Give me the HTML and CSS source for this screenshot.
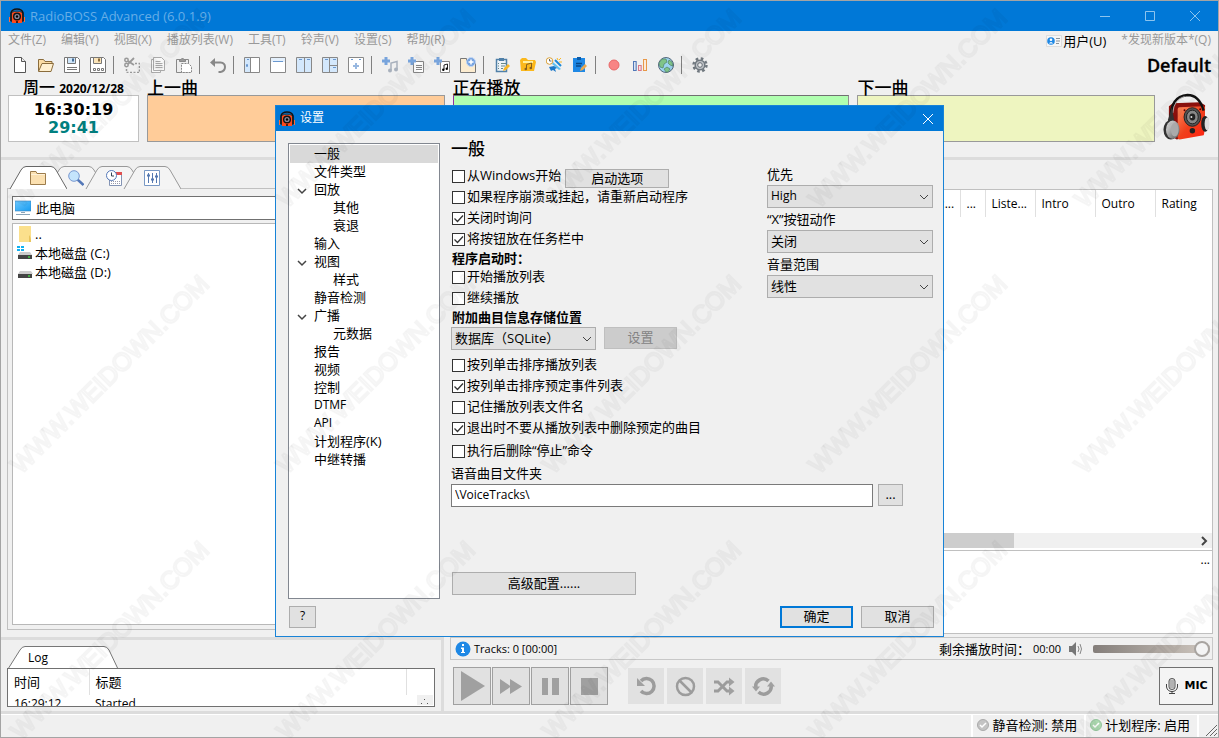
FILE: index.html
```html
<!DOCTYPE html>
<html lang="zh-CN">
<head>
<meta charset="utf-8">
<title>RadioBOSS Advanced (6.0.1.9)</title>
<link rel="stylesheet" href="styles.css">
</head>
<body>
<svg class="defs" aria-hidden="true">
  <defs>
    <linearGradient id="red" x1="0" y1="0" x2="1" y2="1"><stop offset="0" stop-color="#ff8a5c"/><stop offset="0.5" stop-color="#f0401c"/><stop offset="1" stop-color="#ff2010"/></linearGradient>
    <linearGradient id="cup" x1="0" y1="0" x2="1" y2="1"><stop offset="0" stop-color="#e8e8e8"/><stop offset="1" stop-color="#555"/></linearGradient>
    <linearGradient id="screen" x1="0" y1="0" x2="1" y2="1"><stop offset="0" stop-color="#6cc8ff"/><stop offset="1" stop-color="#189cf0"/></linearGradient>
    <symbol id="app" viewBox="0 0 16 16"><path d="M2 8V5q1-4 6-4t6 4v3" fill="none" stroke="#111" stroke-width="1.600"/><path d="M3 4h10v11H3z" fill="#ff4a1c"/><path d="M3 4.500Q5 3 8 3t5 1.500" stroke="#333" fill="none"/><path d="M1 7l2-1v8l-2-1zM15 7l-2-1v8l2-1z" fill="#222"/><path d="M.5 9v5M15.500 9v5" stroke="#ff6a3a"/><circle cx="8" cy="8.500" r="4" fill="#111"/><circle cx="8" cy="8.500" r="2.600" fill="#889"/><circle cx="8" cy="8.500" r="1.200" fill="#000"/><circle cx="8" cy="14" r="1" fill="#111"/></symbol>
    <symbol id="plus" viewBox="0 0 16 16"><path d="M2.500 0h3v2.500H8v3H5.500V8h-3V5.500H0v-3h2.500z" fill="#78a4dc"/></symbol>
    <symbol id="tab" viewBox="0 0 58 23"><path d="M1 23L12 4q2-3.500 5-3.500h25q3 0 5 3.500l11 19"/></symbol>
  </defs>
</svg>
<div class="window">
  <header class="titlebar">
    <svg class="icon"><use href="#app"/></svg>
    <h1>RadioBOSS Advanced (6.0.1.9)</h1>
    <div class="caption">
      <button aria-label="最小化"><svg viewBox="0 0 10 10"><path d="M0 5.500h10"/></svg></button>
      <button aria-label="最大化"><svg viewBox="0 0 10 10"><path d="M.5.5h9v9h-9z"/></svg></button>
      <button aria-label="关闭窗口"><svg viewBox="0 0 10 10"><path d="M0 0l10 10M10 0L0 10"/></svg></button>
    </div>
  </header>
  <nav class="menubar">
    <button>文件(Z)</button><button>编辑(Y)</button><button>视图(X)</button><button>播放列表(W)</button><button>工具(T)</button><button>铃声(V)</button><button>设置(S)</button><button>帮助(R)</button>
    <button class="user"><svg class="icon" viewBox="0 0 16 16"><path d="M.5 2.500h15v11H.5z" fill="#f6f6f6" stroke="#ddd"/><circle cx="5" cy="8" r="3.800" fill="#1e88e5"/><circle cx="5" cy="6.800" r="1.300" fill="#fff"/><path d="M2.800 10.500q2.200-3 4.400 0z" fill="#fff"/><path d="M10 5.500h4M10 8h4M10 10.500h3" stroke="#8a9299"/></svg>用户(U)</button>
    <button>*发现新版本*(Q)</button>
  </nav>
  <div class="toolbar" role="toolbar">
    <button aria-label="新建"><svg viewBox="0 0 16 16"><path d="M2.500.5h7l4 4v11h-11z" fill="#fff" stroke="#555"/><path d="M9.500.5v4h4" fill="#eee" stroke="#555"/></svg></button>
    <button aria-label="打开"><svg viewBox="0 0 16 16"><path d="M.5 14V2.500h5l1.500 2h7V7" fill="#fbdca4" stroke="#8a6c3c"/><path d="M.5 14.500L4 6.500h11.500L13 14.500z" fill="#fff0d0" stroke="#8a6c3c"/></svg></button>
    <button aria-label="保存"><svg viewBox="0 0 16 16"><path d="M.5.5h13l2 2v13H.5z" fill="#fff" stroke="#777"/><path d="M3.500.5h8v6h-8z" fill="#cfe6fa" stroke="#777"/><path d="M9 1.500v3" stroke="#446c96" stroke-width="2"/><path d="M3 10.500h10M3 12.500h10" stroke="#777"/></svg></button>
    <button aria-label="另存为"><svg viewBox="0 0 16 16"><path d="M.5.5h13l2 2v13H.5z" fill="#fff" stroke="#777"/><path d="M3.500.5h8v6h-8z" fill="#fbe4b8" stroke="#777"/><path d="M9 1.500v3" stroke="#8c6c3c" stroke-width="2"/><path d="M3.500 11.500h2v2h-2zM7.500 11.500h2v2h-2zM11.500 11.500h2v2h-2z" fill="none" stroke="#777"/></svg></button>
    <i class="sep"></i>
    <button aria-label="剪切"><svg viewBox="0 0 16 16" fill="none" stroke="#999"><circle cx="2.500" cy="3" r="1.700" stroke-width="1.500"/><circle cx="2.500" cy="8" r="1.700" stroke-width="1.500"/><path d="M4 4l6 4M4 7l6-6" stroke-width="1.800"/><path d="M11 6.500h4.500v9h-13V11" stroke-width="1.500" stroke-dasharray="2 1.500"/></svg></button>
    <button aria-label="复制"><svg viewBox="0 0 16 16" fill="#f8f8f8" stroke="#aaa"><path d="M1.500 2.500h9v13h-9z"/><path d="M3.500.5h8l3 3v10h-11z"/><path d="M5.500 4.500h5M5.500 6.500h7M5.500 8.500h7M5.500 10.500h7"/></svg></button>
    <button aria-label="粘贴"><svg viewBox="0 0 16 16" fill="#eee" stroke="#888"><path d="M.5 2.500h12v13H.5z"/><path d="M3.500 4.500v-2h1.500q1.500-3 3 0h1.500v2z" fill="#999"/><path d="M5.500 6.500h7l3 3v6h-10z" fill="#fff" stroke-dasharray="2 1"/></svg></button>
    <i class="sep"></i>
    <button aria-label="撤销"><svg viewBox="0 0 16 16"><path d="M5 1L0 5.500 5 10z" fill="#888"/><path d="M3 5.500h7.500q4.500.5 4.500 4.500t-4.500 5H8.500" fill="none" stroke="#888" stroke-width="2"/></svg></button>
    <i class="sep"></i>
    <button aria-label="布局一"><svg viewBox="0 0 16 16" fill="#fff" stroke="#888"><path d="M.5.5h15v15H.5z"/><path d="M1 1h5v14H1z" fill="#d4e8fc" stroke="none"/><path d="M6.500 1v14"/><path d="M3 2.500h2M2.500 7.500h1v2h-1z" stroke="#6a98d0"/></svg></button>
    <button aria-label="布局二"><svg viewBox="0 0 16 16" fill="#fff" stroke="#888"><path d="M.5.5h15v15H.5z"/><path d="M1 1h14v4H1z" fill="#e4f0fc" stroke="none"/><path d="M3 4.500h10" stroke="#6a98d0"/></svg></button>
    <button aria-label="布局三"><svg viewBox="0 0 16 16" fill="#d4e8fc" stroke="#888"><path d="M.5.5h15v15H.5z"/><path d="M8.500 1v14"/><path d="M3 2.500h3M11 2.500h3" stroke="#6a98d0"/></svg></button>
    <button aria-label="布局四"><svg viewBox="0 0 16 16" fill="#d4e8fc" stroke="#888"><path d="M.5.5h15v15H.5z"/><path d="M7.500 1v14M8 8.500h7"/><path d="M3 2.500h3M11 2.500h3M11 10.500h3" stroke="#6a98d0"/></svg></button>
    <button aria-label="布局五"><svg viewBox="0 0 16 16" fill="#fff" stroke="#888"><path d="M.5.5h15v15H.5z"/><path d="M3 2.500h2M11 2.500h2" stroke="#6a98d0"/><path d="M8 6v6M5 9h6" stroke="#98b8e0" stroke-width="2"/></svg></button>
    <i class="sep"></i>
    <button aria-label="添加音轨"><svg viewBox="0 0 16 16"><use href="#plus" width="16" height="16"/><path d="M9 13V6l6-1.500V12" fill="none" stroke="#a8b0bc" stroke-width="1.500"/><circle cx="8" cy="13.500" r="2" fill="#a8b0bc"/><circle cx="14" cy="12.500" r="2" fill="#a8b0bc"/></svg></button>
    <button aria-label="添加列表"><svg viewBox="0 0 16 16"><path d="M5.500 4.500h10v11h-10z" fill="#fff" stroke="#888"/><path d="M8 8.500h6M8 10.500h6M8 12.500h6" stroke="#888"/><use href="#plus" width="16" height="16"/></svg></button>
    <button aria-label="添加曲目"><svg viewBox="0 0 16 16"><path d="M6.500 4.500h9v11h-9z" fill="#fff" stroke="#888"/><path d="M10 12.500V8l3.500-1v4.500" fill="none" stroke="#222"/><circle cx="9.300" cy="12.800" r="1.200"/><circle cx="12.800" cy="11.800" r="1.200"/><use href="#plus" width="16" height="16"/></svg></button>
    <button aria-label="添加文件夹"><svg viewBox="0 0 16 16"><path d="M.5 15V1.500h6v3h9v11H.5z" fill="#fcecd0" stroke="#777"/><circle cx="11" cy="5" r="4.500" fill="#78a4e0" stroke="#c4d8f4"/><path d="M11 2.500v5M8.500 5h5" stroke="#fff" stroke-width="1.500"/></svg></button>
    <i class="sep"></i>
    <button aria-label="任务列表"><svg viewBox="0 0 16 16"><path d="M2.500 2.500h10v12h-10z" fill="#eef4fa" stroke="#5080a8" stroke-width="1.500"/><path d="M5 1h5v3H5z" fill="#5080a8"/><path d="M4 6.500h1M7 6.500h5M4 9h1M7 9h4M4 11.500h1M7 11.500h2" stroke="#688"/><path d="M9 14l1-3 4-4 2 2-4 4z" fill="#f8b828"/></svg></button>
    <button aria-label="音乐文件夹"><svg viewBox="0 0 16 16"><path d="M1 14L0 3l2-2h4l2 2h7l1 2-2 9z" fill="#fbb81c"/><path d="M3 4h10v2H3z" fill="#fff0a0"/><path d="M6.500 12V7.500l5-1.500v5" fill="none" stroke="#876020"/><circle cx="5.800" cy="12" r="1.300" fill="#876020"/><circle cx="10.800" cy="11" r="1.300" fill="#876020"/></svg></button>
    <button aria-label="广告计划"><svg viewBox="0 0 16 16"><path d="M7 5l8 7-2 1-7-6z" fill="#60c0f0"/><path d="M9 3l6 6" stroke="#1c88d8" stroke-width="2"/><path d="M3 10l5-1 3 2-2 1 1 3-3-2-2 1z" fill="#1c78c8"/><path d="M11 1l1 2M15 1l-2 2M13 5l3 0" stroke="#f8b828"/><circle cx="3.500" cy="4" r="3.300" fill="#fff" stroke="#d8a038"/><path d="M3.500 2v2h2" stroke="#666" fill="none"/></svg></button>
    <button aria-label="编辑计划"><svg viewBox="0 0 16 16"><path d="M1 1h12v14H1z" fill="#1e88e5"/><path d="M5 0h4v3H5z" fill="#0c5ca8"/><path d="M4 6.500h6M4 9h5" stroke="#0a4888" stroke-width="1.500"/><path d="M8 14l1-3 4-4 2 2-4 4z" fill="#e8a850"/></svg></button>
    <i class="sep"></i>
    <button aria-label="录音"><svg viewBox="0 0 16 16"><circle cx="8" cy="8" r="5" fill="#f88484" stroke="#e86868"/></svg></button>
    <button aria-label="统计"><svg viewBox="0 0 16 16" fill="#fff" stroke-width="1.200"><path d="M1.600 4.500h2.500v9H1.600z" stroke="#5078b8"/><path d="M6.600 8.500h2.500v5H6.600z" stroke="#d87888"/><path d="M11.600 2.500h2.800v11h-2.800z" stroke="#e89848"/></svg></button>
    <button aria-label="网络"><svg viewBox="0 0 16 16"><circle cx="8" cy="8" r="7.500" fill="#9cd4f0" stroke="#56687c"/><path d="M1 6l3-4 4 0 1 3-3 2-1 4-3-1zM8 15l-2-3 3-2 3 2-2 3zM11 3l3 2 1 4-3-1-2-2z" fill="#80c488" stroke="#508468" stroke-width=".7"/></svg></button>
    <i class="sep"></i>
    <button aria-label="选项"><svg viewBox="0 0 16 16"><circle cx="8" cy="8" r="6.500" fill="none" stroke="#70787f" stroke-width="2.400" stroke-dasharray="2.600 2.500"/><circle cx="8" cy="8" r="4.800" fill="#c0c4c8" stroke="#70787f" stroke-width="1.500"/><circle cx="8" cy="8" r="2.300" fill="#eee" stroke="#687078"/></svg></button>
    <strong>Default</strong>
  </div>
  <section class="decks">
    <div class="deck clock"><h2>周一 <b>2020/12/28</b></h2><div><time>16:30:19</time><time class="left-time">29:41</time></div></div>
    <div class="deck prev"><h2>上一曲</h2><div></div></div>
    <div class="deck now"><h2>正在播放</h2><div></div></div>
    <div class="deck next"><h2>下一曲</h2><div></div></div>
    <svg class="logo" viewBox="0 0 48 48"><path d="M6 13l4-3 28-1 5 3-1 28-28 7-8-5z" fill="#8c100c"/><path d="M17 14l24-1q2 0 2 2l-1 26q0 2-2 2l-23 4q-2 0-2-2V16q0-2 2-2z" fill="url(#red)"/><path d="M8 27Q7 3 25 1.500q12 0 16.500 16" fill="none" stroke="#111" stroke-width="2.500"/><path d="M10 20Q11 6 22 3" fill="none" stroke="#aaa"/><ellipse cx="30" cy="24" rx="8.500" ry="9.500" fill="#555" stroke="#222"/><ellipse cx="30" cy="24" rx="6" ry="7" fill="#888" stroke="#222"/><ellipse cx="30" cy="24" rx="3" ry="3.500" fill="#222"/><circle cx="29" cy="24" r="1" fill="#ddd"/><circle cx="30" cy="38" r="2.800" fill="#222"/><circle cx="22" cy="17" r="1" fill="#500"/><circle cx="38" cy="16" r="1" fill="#500"/><ellipse cx="43" cy="31" rx="4" ry="8" fill="#222"/><ellipse cx="45" cy="31" rx="2.500" ry="6.500" fill="#ddd"/><path d="M9 14l3 16-5 4-2-7z" fill="#333"/><ellipse cx="8" cy="37" rx="7.500" ry="10" fill="#333"/><ellipse cx="10" cy="37" rx="7" ry="9.500" fill="url(#cup)"/><ellipse cx="12" cy="37" rx="4" ry="7" fill="#aaa"/></svg>
  </section>
  <main class="workspace">
    <section class="left">
      <div class="browser">
        <div class="tabs" role="tablist">
          <button class="tab active" role="tab" aria-label="文件"><svg class="shape"><use href="#tab"/></svg><svg class="icon" viewBox="0 0 16 16"><path d="M.5 14.500v-13H6l1 2h8.500v11z" fill="#fbe0b0" stroke="#9c7c4c"/><path d="M1 4.500h14" stroke="#fff2d8"/></svg></button>
          <button class="tab" role="tab" aria-label="搜索"><svg class="shape"><use href="#tab"/></svg><svg class="icon" viewBox="0 0 16 16"><path d="M9.500 9.500l6 5.500" stroke="#5478b8" stroke-width="2.500"/><circle cx="6" cy="6" r="5.300" fill="#c4e4fc" stroke="#7898d0"/></svg></button>
          <button class="tab" role="tab" aria-label="计划"><svg class="shape"><use href="#tab"/></svg><svg class="icon" viewBox="0 0 16 16"><path d="M3.500 2.500h12v13h-12z" fill="#fff" stroke="#8494b4"/><path d="M10 2h6v3h-6z" fill="#e05050"/><path d="M5 11.500h9M5 13.500h9" stroke="#99a" stroke-dasharray="1 1"/><circle cx="5.500" cy="5.500" r="5" fill="#fff" stroke="#5478b8"/><path d="M5.500 2.500V6h2.500" stroke="#345" fill="none"/></svg></button>
          <button class="tab" role="tab" aria-label="均衡器"><svg class="shape"><use href="#tab"/></svg><svg class="icon" viewBox="0 0 16 16"><path d="M.5.5h15v15H.5z" fill="#fff" stroke="#7898c4"/><path d="M4.500 3v10M8.500 3v10M12.500 3v10" stroke="#5478b0"/><path d="M3 5.500h3M7 9.500h3M11 6.500h3" stroke="#5478b0" stroke-width="2"/></svg></button>
        </div>
        <div class="files">
          <button class="path"><svg class="icon" viewBox="0 0 16 16"><path d="M0 1h16v10H0z" fill="url(#screen)"/><path d="M0 1h16v10H0z" fill="none" stroke="#3c84bc" stroke-width=".6"/><path d="M1 14.500h14M6 12.500h4" stroke="#8aa4b8"/></svg>此电脑</button>
          <ul class="drives">
            <li><svg class="icon" viewBox="0 0 16 16"><path d="M2 0h12v16H2z" fill="#fbe08c"/><path d="M12 9q2 2 2 7h-2z" fill="#e8c45c"/></svg>..</li>
            <li><svg class="icon" viewBox="0 0 16 16"><path d="M0 1h3v2H0zM4 1h3v2H4zM0 4h3v2H0zM4 4h3v2H4z" fill="#10b0f0"/><path d="M3 7h10l2 3H1z" fill="#ccc"/><path d="M1 10h14v4H1z" fill="#444"/><path d="M11 12h2" stroke="#4c4" stroke-width="1.500"/></svg>本地磁盘 (C:)</li>
            <li><svg class="icon" viewBox="0 0 16 16"><path d="M3 7h11l2 3H1z" fill="#ccc"/><path d="M1 10h14v4H1z" fill="#444"/><path d="M11 12h2" stroke="#4c4" stroke-width="1.500"/></svg>本地磁盘 (D:)</li>
          </ul>
        </div>
      </div>
      <div class="log">
        <button class="logtab"><svg viewBox="0 0 112 23"><path d="M1 23L13 4q2-3.500 5-3.500h79q3 0 5 3.500l9 19"/></svg><span>Log</span></button>
        <div class="logbox">
          <table><thead><tr><th>时间</th><th>标题</th><th></th></tr></thead><tbody><tr><td>16:29:12</td><td>Started</td><td></td></tr></tbody></table>
          <svg class="corner" viewBox="0 0 16 10"><path d="M4 8.500h1M7 4.500h1M10 8.500h1" stroke="#555"/></svg>
        </div>
      </div>
    </section>
    <section class="right">
      <div class="playlist">
        <table><thead><tr><th></th><th>:...</th><th>...</th><th>Liste...</th><th>Intro</th><th>Outro</th><th>Rating</th></tr></thead></table>
        <div class="hscroll"><span></span><svg viewBox="0 0 16 16"><path d="M6 4l4 4-4 4" fill="none" stroke="#444" stroke-width="2"/></svg></div>
        <div class="notes">...</div>
      </div>
      <div class="info">
        <svg class="icon" viewBox="0 0 16 16"><circle cx="8" cy="8" r="7.500" fill="#1e88e5"/><path d="M7 3h2v2H7zM6 6.500h3V12H7V8H6zM6 11h4v1H6z" fill="#fff"/></svg>
        <span>Tracks: 0 [00:00]</span>
        <span class="remain">剩余播放时间：</span><span>00:00</span>
        <svg class="icon speaker" viewBox="0 0 16 16"><path d="M1 5h3l4-4v14l-4-4H1z" fill="#777"/><path d="M10 5q2 3 0 6M12 3q3 5 0 10" fill="none" stroke="#888"/></svg>
        <input type="range" aria-label="音量" value="100">
      </div>
      <div class="player">
        <button class="big" aria-label="播放"><svg viewBox="0 0 36 36"><path d="M7 3l24 15L7 33z"/></svg></button>
        <button class="big" aria-label="快进"><svg viewBox="0 0 36 36"><path d="M7 11l11 7.500L7 26zM17 11l12 7.500L17 26z"/></svg></button>
        <button class="big" aria-label="暂停"><svg viewBox="0 0 36 36"><path d="M10 10h6v17h-6zM20 10h7v17h-7z"/></svg></button>
        <button class="big" aria-label="停止"><svg viewBox="0 0 36 36"><path d="M10 10h17v17H10z"/></svg></button>
        <i></i>
        <button aria-label="重复"><svg viewBox="0 0 36 36"><path d="M13 13a7.500 7.500 0 1 1 0 10" fill="none" stroke="#9c9c9c" stroke-width="3.500"/><path d="M9 10v8h8z"/></svg></button>
        <button aria-label="禁止"><svg viewBox="0 0 36 36"><circle cx="18.500" cy="18.500" r="8.500" fill="none" stroke="#9c9c9c" stroke-width="2.500"/><path d="M12.500 12.500l12 12" stroke="#9c9c9c" stroke-width="2.500"/></svg></button>
        <button aria-label="随机"><svg viewBox="0 0 36 36"><path d="M8 14h4l9 9h3M8 23h4l9-9h3" fill="none" stroke="#9c9c9c" stroke-width="2.800"/><path d="M23 9.500l5.500 4.500-5.500 4.500zM23 18.500l5.500 4.500-5.500 4.500z"/></svg></button>
        <button aria-label="循环"><svg viewBox="0 0 36 36"><path d="M11 20a7.500 7.500 0 0 1 12.500-7M26 17a7.500 7.500 0 0 1-12.500 7" fill="none" stroke="#9c9c9c" stroke-width="3.500"/><path d="M7 18.500h8l-4 5zM22 18.500h8l-4-5z"/></svg></button>
        <button class="mic"><svg class="icon" viewBox="0 0 16 16"><path d="M5 3q0-2.500 3-2.500T11 3v6q0 2.500-3 2.500T5 9z" fill="#ddd" stroke="#555"/><path d="M6 3h4M6 5h4M6 7h4M6 9h4" stroke="#888"/><path d="M2.500 6v3q1 4.500 5.500 4.500T13.500 9V6M8 13v2.500M5 15.500h6" fill="none" stroke="#444"/></svg>MIC</button>
      </div>
    </section>
  </main>
  <footer class="status">
    <span class="grow"></span>
    <span><svg viewBox="0 0 12 12"><circle cx="6" cy="6" r="5.500" fill="#c4c4c4" stroke="#aaa"/><path d="M3 6l2 2 4-4" fill="none" stroke="#fff" stroke-width="1.500"/></svg>静音检测: 禁用</span>
    <span><svg viewBox="0 0 12 12"><circle cx="6" cy="6" r="5.500" fill="#acd8b0" stroke="#94c49c"/><path d="M3 6l2 2 4-4" fill="none" stroke="#fff" stroke-width="1.500"/></svg>计划程序: 启用</span>
    <span class="grip"><svg viewBox="0 0 16 16"><path d="M4 15L15 4M8 15l7-7M12 15l3-3" stroke="#666"/></svg></span>
  </footer>
</div>

<div class="dialog" role="dialog" aria-labelledby="dlg-title">
  <header class="dlg-title"><svg class="icon"><use href="#app"/></svg><h2 id="dlg-title">设置</h2><button aria-label="关闭对话框"><svg viewBox="0 0 10 10"><path d="M0 0l10 10M10 0L0 10"/></svg></button></header>
  <div class="dlg-body">
    <ul class="tree">
      <li class="selected">一般</li><li>文件类型</li><li class="open">回放</li><li class="sub">其他</li><li class="sub">衰退</li><li>输入</li><li class="open">视图</li><li class="sub">样式</li><li>静音检测</li><li class="open">广播</li><li class="sub">元数据</li><li>报告</li><li>视频</li><li>控制</li><li class="latin">DTMF</li><li class="latin">API</li><li>计划程序(K)</li><li>中继转播</li>
    </ul>
    <form class="page">
      <h3>一般</h3>
      <div class="columns">
        <div class="options">
          <div class="row startup-row"><label class="check"><input type="checkbox">从Windows开始</label><button type="button" class="btn startup">启动选项</button></div>
          <label class="check"><input type="checkbox">如果程序崩溃或挂起，请重新启动程序</label>
          <label class="check"><input type="checkbox" checked>关闭时询问</label>
          <label class="check"><input type="checkbox" checked>将按钮放在任务栏中</label>
          <h4>程序启动时：</h4>
          <label class="check"><input type="checkbox">开始播放列表</label>
          <label class="check"><input type="checkbox">继续播放</label>
          <h4>附加曲目信息存储位置</h4>
          <div class="row storage"><select aria-label="附加曲目信息存储位置"><option>数据库（SQLite）</option></select><button type="button" class="btn" disabled>设置</button></div>
          <label class="check"><input type="checkbox">按列单击排序播放列表</label>
          <label class="check"><input type="checkbox" checked>按列单击排序预定事件列表</label>
          <label class="check"><input type="checkbox">记住播放列表文件名</label>
          <label class="check"><input type="checkbox" checked>退出时不要从播放列表中删除预定的曲目</label>
          <label class="check last"><input type="checkbox">执行后删除“停止”命令</label>
        </div>
        <div class="fields">
          <label for="priority">优先</label><select id="priority"><option>High</option></select>
          <label for="xaction">“X”按钮动作</label><select id="xaction"><option>关闭</option></select>
          <label for="volrange">音量范围</label><select id="volrange"><option>线性</option></select>
        </div>
      </div>
      <label class="folder-label" for="folder">语音曲目文件夹</label>
      <div class="folder"><input type="text" id="folder" value="\VoiceTracks\"><button type="button" class="btn">...</button></div>
      <button type="button" class="btn advanced">高级配置......</button>
    </form>
  </div>
  <footer class="dlg-foot"><button class="btn help">?</button><button class="btn ok">确定</button><button class="btn">取消</button></footer>
</div>

<svg class="watermark" aria-hidden="true"><defs><pattern id="wm" width="266" height="266" patternUnits="userSpaceOnUse"><text x="0" y="0" transform="translate(21 209) rotate(-45)">WWW.WEIDOWN.COM</text></pattern></defs><rect width="100%" height="100%" fill="url(#wm)"/></svg>
</body>
</html>
```
FILE: styles.css
```css
* { box-sizing: border-box; }
html, body { height: 100%; }
body { margin: 0; overflow: hidden; font: 12px/18px "Open Sans", "Noto Sans CJK SC", sans-serif; color: #000; background: #f0f0f0; }
h1, h2, h3, h4, ul { margin: 0; padding: 0; list-style: none; font-weight: normal; font-size: inherit; }
button { font: inherit; color: inherit; border: 0; padding: 0; background: none; }
button, label { white-space: nowrap; }
svg { display: block; flex: none; }
.icon { width: 16px; height: 16px; }
.defs { position: absolute; width: 0; height: 0; }

.window { display: flex; flex-direction: column; height: 100%; min-height: 600px; border: 1px solid #a4a4a4; }
.titlebar { display: flex; align-items: center; height: 30px; padding-left: 8px; gap: 5px; background: #0078d7; color: #66aee7; }
.titlebar h1 { font-size: 13px; white-space: nowrap; }
.caption { display: flex; margin-left: auto; padding-right: 1px; }
.caption button { display: grid; place-items: center; width: 45px; height: 30px; }
.caption svg, .dlg-title button svg { width: 10px; height: 10px; fill: none; stroke: #8cc4ee; }

.menubar { display: flex; align-items: center; gap: 15px; height: 19px; padding: 0 7px; color: #999; font-size: 12px; }
.menubar button { padding-bottom: 2px; }
.menubar .user { display: flex; align-items: center; gap: 1px; margin-left: auto; color: #000; font-size: 13px; padding-bottom: 0; }

.toolbar { display: flex; align-items: center; gap: 10px; height: 30px; padding: 0 7px 0 11px; }
.toolbar button, .toolbar svg { width: 16px; height: 16px; flex: none; }
.sep { width: 1px; height: 18px; margin-left: -3px; background: #808080; }
.toolbar strong { margin-left: auto; font-size: 18px; font-weight: 600; -webkit-text-stroke: 0.3px #000; }

.decks { display: grid; grid-template-columns: 131px 3fr 4fr 3fr 47px; gap: 8px; height: 62px; padding: 0 8px 0 7px; }
.deck h2 { height: 15px; line-height: 15px; font-size: 17px; font-weight: 500; white-space: nowrap; }
.deck > div { height: 47px; border: 1px solid #999; }
.clock h2 { text-align: center; font-size: 16px; }
.clock h2 b { font-size: 12px; }
.clock > div { display: flex; flex-direction: column; align-items: center; padding-top: 5px; background: #fff; border-color: #c0c0c0; font: bold 16px/18px "DejaVu Sans", sans-serif; }
.left-time { color: #008080; }
.prev > div { background: #ffcc99; }
.now > div { background: #b0ffb0; border-color: #707070 #909090 #909090 #9030a0; }
.next > div { background: #eef5c0; }
.logo { width: 47px; height: 48px; margin-top: 13px; }

.workspace { flex: 1; min-height: 0; margin-top: 15px; display: grid; grid-template-columns: 443px minmax(0, 1fr); border-top: 3px solid #dcdcdc; }
.left { display: flex; flex-direction: column; min-height: 0; border-right: 3px solid #dcdcdc; }
.browser { flex: 1; display: flex; flex-direction: column; min-height: 0; padding: 6px 6px 7px; }
.tabs { display: flex; height: 23px; padding-left: 2px; position: relative; z-index: 1; margin-bottom: -1px; }
.tab { display: grid; place-items: center; width: 58px; height: 23px; margin-right: -20px; }
.tab > * { grid-area: 1 / 1; }
.tab .shape { width: 58px; height: 23px; fill: #f4f4f4; stroke: #999; }
.tab .icon { z-index: 3; }
.tab.active { z-index: 2; }
.tab.active .shape { fill: #fff; stroke: #666; }
.files { flex: 1; display: flex; flex-direction: column; gap: 3px; min-height: 0; padding: 7px 4px 4px; border: 1px solid #c0c0c0; font-size: 13px; }
.path { display: flex; align-items: center; gap: 5px; height: 24px; padding-left: 2px; border: 1px solid #707070; background: #fff; }
.drives { flex: 1; border: 1px solid #b8b8b8; background: #fff; }
.drives li { display: flex; align-items: center; gap: 2px; height: 19px; padding-left: 4px; line-height: 16px; }

.log { height: 77px; padding: 6px; border-top: 3px solid #dcdcdc; border-bottom: 3px solid #dcdcdc; flex: none; }
.logtab { display: grid; align-items: center; width: 112px; height: 22px; text-align: left; }
.logtab > * { grid-area: 1 / 1; }
.logtab svg { width: 112px; height: 23px; fill: #fff; stroke: #777; }
.logtab span { padding-left: 21px; }
.logbox { position: relative; height: 39px; overflow: hidden; border: 1px solid #707070; background: #fff; }
.log table { width: 100%; border-collapse: collapse; table-layout: fixed; }
.log th, .log td { padding: 0 6px; text-align: left; font-weight: normal; }
.log th { height: 26px; font-size: 13px; border-right: 1px solid #e0e0e0; }
.log th:nth-child(1) { width: 81px; }
.log th:nth-child(3) { width: 28px; border-right: 0; }
.log td { height: 18px; }
.corner { position: absolute; right: 1px; bottom: 1px; width: 16px; height: 10px; background: #f0f0f0; }

.right { display: flex; flex-direction: column; min-width: 0; min-height: 0; padding: 29px 5px 0 6px; border-bottom: 3px solid #dcdcdc; }
.playlist { flex: 1; display: flex; flex-direction: column; min-height: 0; border: 1px solid #c0c0c0; background: #fff; }
.playlist table { width: 100%; table-layout: fixed; border-collapse: collapse; }
.playlist th { height: 27px; padding: 0 0 0 6px; overflow: hidden; text-align: left; font-weight: normal; border-right: 1px solid #e0e0e0; white-space: nowrap; }
.playlist th:nth-child(2) { width: 25px; }
.playlist th:nth-child(3) { width: 25px; }
.playlist th:nth-child(4) { width: 50px; }
.playlist th:nth-child(5), .playlist th:nth-child(6) { width: 60px; }
.playlist th:nth-child(7) { width: 57px; border-right: 0; }
.hscroll { display: flex; justify-content: space-between; height: 15px; margin-top: auto; background: #f0f0f0; }
.hscroll span { width: 74%; background: #cdcdcd; }
.hscroll svg { width: 16px; height: 16px; }
.notes { height: 83px; margin-top: 2px; padding: 0 2px; border-top: 1px solid #c0c0c0; text-align: right; }
.info { display: flex; align-items: center; height: 23px; margin-top: 3px; padding: 0 2px 0 4px; gap: 3px; border: 1px solid #c8c8c8; font-size: 11px; line-height: 16px; flex: none; }
.remain { margin-left: auto; font-size: 13px; }
.speaker { margin: 0 6px 0 4px; }
input[type="range"] { appearance: none; width: 117px; height: 16px; margin: 0; background: none; }
input[type="range"]::-webkit-slider-runnable-track { height: 8px; border-radius: 2px; background: linear-gradient(90deg, #847e7a, #d0c8c0); }
input[type="range"]::-webkit-slider-thumb { appearance: none; width: 16px; height: 16px; margin-top: -4px; border: 2px solid #a8a4a0; border-radius: 50%; background: #f4f4f4; }
.player { display: flex; align-items: center; gap: 3px; height: 51px; padding: 0 0 0 3px; flex: none; }
.player button { width: 36px; height: 36px; background: #e1e1e1; }
.player button svg { width: 36px; height: 36px; fill: #a0a0a0; }
.player .big { width: 38px; height: 38px; margin-right: -2px; border: 1px solid #a0a0a0; }
.player i { width: 16px; }
.player .mic { display: flex; align-items: center; justify-content: center; gap: 4px; width: 54px; height: 38px; margin-left: auto; border: 1px solid #707070; background: #f4f4f4; font: bold 11px/16px "DejaVu Sans", sans-serif; }
.player .mic svg { width: 16px; height: 16px; fill: none; }

.status { display: flex; gap: 2px; height: 23px; padding-top: 1px; background: #fff; font-size: 13px; line-height: 16px; flex: none; }
.status span { display: flex; align-items: center; gap: 3px; padding: 0 7px 2px 4px; background: #f0f0f0; white-space: nowrap; }
.status .grow { flex: 1; }
.status span > svg { width: 12px; height: 12px; }
.status .grip { width: 19px; padding: 0; align-items: flex-end; justify-content: flex-end; }
.status .grip svg { width: 16px; height: 16px; }

.dialog { position: absolute; left: 275px; top: 105px; display: flex; flex-direction: column; width: 669px; height: 532px; border: 1px solid #1883d7; background: #f0f0f0; font-size: 12px; }
.dlg-title { display: flex; align-items: center; gap: 5px; height: 25px; padding: 0 0 0 3px; background: #0078d7; color: #fff; }
.dlg-title h2 { padding-bottom: 2px; }
.dlg-title button { display: grid; place-items: center; width: 30px; height: 25px; margin-left: auto; }
.dlg-title button svg { stroke: #fff; }
.dlg-body { display: flex; gap: 11px; flex: 1; min-height: 0; padding: 12px 10px 0 12px; }
.tree { width: 152px; padding: 1px; border: 1px solid #828790; background: #fff; font-size: 13px; line-height: 16px; flex: none; }
.tree li { height: 18px; padding-left: 24px; }
.tree .latin { font-size: 12px; }
.tree .sub { padding-left: 43px; }
.tree .selected { background: #d9d9d9; }
.tree .open { background: url("data:image/svg+xml,%3Csvg xmlns='http://www.w3.org/2000/svg' width='10' height='10'%3E%3Cpath d='M1 3l4 4 4-4' fill='none' stroke='%23444' stroke-width='1.5'/%3E%3C/svg%3E") 7px 5px no-repeat; }
.page { flex: 1; display: flex; flex-direction: column; min-width: 0; font-size: 13px; }
.page h3 { height: 22px; line-height: 12px; font-size: 17px; font-weight: 500; }
.columns { display: flex; justify-content: space-between; }
.row { display: flex; gap: 8px; }
.startup-row { gap: 4px; }
.check { display: flex; align-items: center; gap: 2px; height: 21px; padding: 0 0 2px 1px; }
input[type="checkbox"] { appearance: none; width: 13px; height: 13px; margin: 3px 0 0; border: 1px solid #333; background: #fff center no-repeat; flex: none; }
input[type="checkbox"]:checked { background-image: url("data:image/svg+xml,%3Csvg xmlns='http://www.w3.org/2000/svg' width='11' height='11'%3E%3Cpath d='M1.500 5.500l3 3 5.500-6' fill='none' stroke='%23333' stroke-width='1.300'/%3E%3C/svg%3E"); }
.btn { height: 22px; padding-bottom: 2px; border: 1px solid #adadad; background: #e1e1e1; font-size: 13px; line-height: 16px; }
.btn:disabled { color: #838383; background: #ccc; border-color: #bfbfbf; }
.startup { width: 104px; height: 19px; margin: 4px 0 -2px; line-height: 14px; }
.options h4 { height: 18px; line-height: 18px; padding-left: 1px; font-size: 13px; font-weight: bold; }
.options h4 + .check { margin-top: -1px; }
.storage { margin: 1px 0 4px; }
.storage select { width: 145px; }
.storage .btn { width: 73px; }
.last { margin-top: 2px; }
select { appearance: none; height: 23px; padding: 0 3px 2px; border: 1px solid #adadad; border-radius: 0; color: #000; font: inherit; background: #e1e1e1 url("data:image/svg+xml,%3Csvg xmlns='http://www.w3.org/2000/svg' width='10' height='10'%3E%3Cpath d='M1 3l4 4 4-4' fill='none' stroke='%23444'/%3E%3C/svg%3E") right 3px center no-repeat; }
#priority { font-size: 12px; }
.fields { display: flex; flex-direction: column; gap: 2px; width: 166px; }
.fields label { height: 18px; }
.folder-label { margin-top: 3px; }
.folder { display: flex; gap: 5px; margin-top: 2px; }
.folder input { width: 422px; height: 23px; padding: 0 3px 2px; border: 1px solid #7a7a7a; border-radius: 0; font: 12px/18px "Open Sans", "Noto Sans CJK SC", sans-serif; }
.folder .btn { width: 25px; }
.advanced { width: 184px; height: 23px; margin: auto 0 4px 1px; }
.dlg-foot { display: flex; gap: 8px; height: 37px; padding: 7px 9px 0 13px; }
.dlg-foot .btn { width: 73px; }
.dlg-foot .help { width: 27px; margin-right: auto; font-size: 12px; }
.dlg-foot .ok { border: 2px solid #0078d7; }

.watermark { position: absolute; inset: 0; width: 100%; height: 100%; pointer-events: none; }
.watermark text { font: 25px "Liberation Sans", sans-serif; fill: none; stroke: #000; stroke-opacity: 0.04; stroke-width: 2px; }
```
